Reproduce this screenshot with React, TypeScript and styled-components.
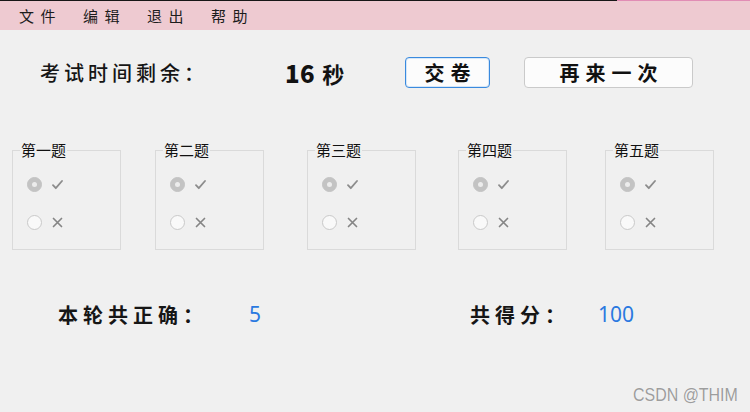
import styled, { createGlobalStyle } from "styled-components";

const GlobalStyle = createGlobalStyle`
  html, body {
    margin: 0;
    padding: 0;
    background: #f0f0f0;
  }
  body {
    font-family: "Noto Sans CJK SC", "Noto Sans", sans-serif;
  }
`;

const CJK = `"Noto Sans CJK SC", "Noto Sans", sans-serif`;

const Page = styled.div`
  position: relative;
  width: 750px;
  height: 412px;
  overflow: hidden;
  background: #f0f0f0;
  display: flex;
  flex-direction: column;
`;

const TopEdge = styled.div`
  height: 1px;
  flex: none;
  background: linear-gradient(to right, #171717 0, #171717 617px, #e18db5 617px, #e18db5 100%);
`;

const MenuBar = styled.nav`
  height: 29px;
  flex: none;
  background: #eecad1;
  display: flex;
  align-items: center;
  gap: 21px;
  padding-left: 19px;
`;

const MenuItem = styled.span`
  font-family: ${CJK};
  font-size: 15px;
  letter-spacing: 6.5px;
  color: #1c1c1c;
  line-height: 1;
`;

const Header = styled.div`
  margin-top: 27px;
  height: 31px;
  padding-left: 40px;
  display: flex;
  align-items: center;
`;

const Label = styled.span<{ $width: number; $bold?: boolean; $spacing?: number }>`
  width: ${(p) => p.$width}px;
  flex: none;
  font-family: ${CJK};
  font-size: 20px;
  font-weight: ${(p) => (p.$bold ? 700 : 500)};
  letter-spacing: ${(p) => p.$spacing ?? 4}px;
  color: #161616;
  white-space: nowrap;
`;

const Timer = styled.span`
  width: 120px;
  flex: none;
  font-family: ${CJK};
  font-size: 22px;
  font-weight: 700;
  color: #121212;
  white-space: nowrap;

  b {
    font-size: 24px;
    letter-spacing: 0.5px;
    margin-right: 7px;
  }
`;

const Button = styled.button<{ $focused?: boolean; $width: number }>`
  width: ${(p) => p.$width}px;
  height: 31px;
  flex: none;
  padding: 0;
  margin-right: 34px;
  border-radius: 4px;
  background: #fcfcfc;
  border: 1px solid ${(p) => (p.$focused ? "#3a8ade" : "#cacaca")};
  box-shadow: ${(p) => (p.$focused ? "inset 0 0 0 1px #d6e7f8" : "none")};
  font-family: ${CJK};
  font-size: 20px;
  font-weight: 700;
  letter-spacing: 6px;
  text-indent: 6px;
  color: #111;
  cursor: pointer;
`;

const Groups = styled.div`
  margin-top: 62px;
  padding-left: 12px;
  display: grid;
  grid-template-columns: 143px 152px 151px 147px 109px;
`;

const Group = styled.div`
  position: relative;
  width: 109px;
  height: 100px;
  box-sizing: border-box;
  border: 1px solid #dadada;
  padding: 26px 0 0 14px;
  display: flex;
  flex-direction: column;
  gap: 23px;
`;

const Legend = styled.span`
  position: absolute;
  top: -10px;
  left: 7px;
  padding: 0 1px;
  background: #f0f0f0;
  font-family: ${CJK};
  font-size: 15px;
  line-height: 18px;
  color: #111;
`;

const Option = styled.div`
  height: 15px;
  display: flex;
  align-items: center;
  gap: 10px;
`;

const Radio = styled.span<{ $checked?: boolean }>`
  width: 15px;
  height: 15px;
  box-sizing: border-box;
  border-radius: 50%;
  flex: none;
  display: flex;
  align-items: center;
  justify-content: center;
  background: ${(p) => (p.$checked ? "#c3c3c3" : "#f9f9f9")};
  border: 1px solid ${(p) => (p.$checked ? "#c3c3c3" : "#c9c9c9")};

  &::after {
    content: "";
    display: ${(p) => (p.$checked ? "block" : "none")};
    width: 5px;
    height: 5px;
    border-radius: 50%;
    background: #ececec;
  }
`;

const Summary = styled.div`
  margin-top: 49px;
  height: 30px;
  padding-left: 58px;
  display: flex;
  align-items: center;
`;

const Score = styled.span<{ $width?: number }>`
  width: ${(p) => (p.$width ? `${p.$width}px` : "auto")};
  flex: none;
  font-family: "Noto Sans", sans-serif;
  font-size: 21px;
  color: #2a79e0;
`;

const Watermark = styled.span`
  position: absolute;
  right: 12px;
  bottom: 6px;
  font-family: "Liberation Sans", Arial, sans-serif;
  font-size: 19px;
  color: #9d9d9d;
  transform: scaleX(0.84);
  transform-origin: right center;
  text-shadow: 0 0 1px #ffffff;
`;

function CheckIcon() {
  return (
    <svg width="11" height="11" viewBox="0 0 11 11" fill="none">
      <path d="M1 6.2 L3.8 9.2 L10 2" stroke="#8c8c8c" strokeWidth="1.8" strokeLinecap="round" strokeLinejoin="round" />
    </svg>
  );
}

function CrossIcon() {
  return (
    <svg width="11" height="11" viewBox="0 0 11 11" fill="none">
      <path d="M1.5 1.5 L9.5 9.5 M9.5 1.5 L1.5 9.5" stroke="#858585" strokeWidth="1.7" strokeLinecap="round" />
    </svg>
  );
}

const questions = ["第一题", "第二题", "第三题", "第四题", "第五题"];

export default function App() {
  return (
    <Page>
      <GlobalStyle />
      <TopEdge />
      <MenuBar>
        <MenuItem>文件</MenuItem>
        <MenuItem>编辑</MenuItem>
        <MenuItem>退出</MenuItem>
        <MenuItem>帮助</MenuItem>
      </MenuBar>

      <Header>
        <Label $width={245}>考试时间剩余：</Label>
        <Timer>
          <b>16</b>秒
        </Timer>
        <Button type="button" $focused $width={85}>
          交卷
        </Button>
        <Button type="button" $width={169}>
          再来一次
        </Button>
      </Header>

      <Groups>
        {questions.map((q) => (
          <Group key={q}>
            <Legend>{q}</Legend>
            <Option>
              <Radio $checked />
              <CheckIcon />
            </Option>
            <Option>
              <Radio />
              <CrossIcon />
            </Option>
          </Group>
        ))}
      </Groups>

      <Summary>
        <Label $width={191} $bold $spacing={5}>
          本轮共正确：
        </Label>
        <Score $width={221}>5</Score>
        <Label $width={128} $bold $spacing={5}>
          共得分：
        </Label>
        <Score>100</Score>
      </Summary>

      <Watermark>CSDN @THIM</Watermark>
    </Page>
  );
}
